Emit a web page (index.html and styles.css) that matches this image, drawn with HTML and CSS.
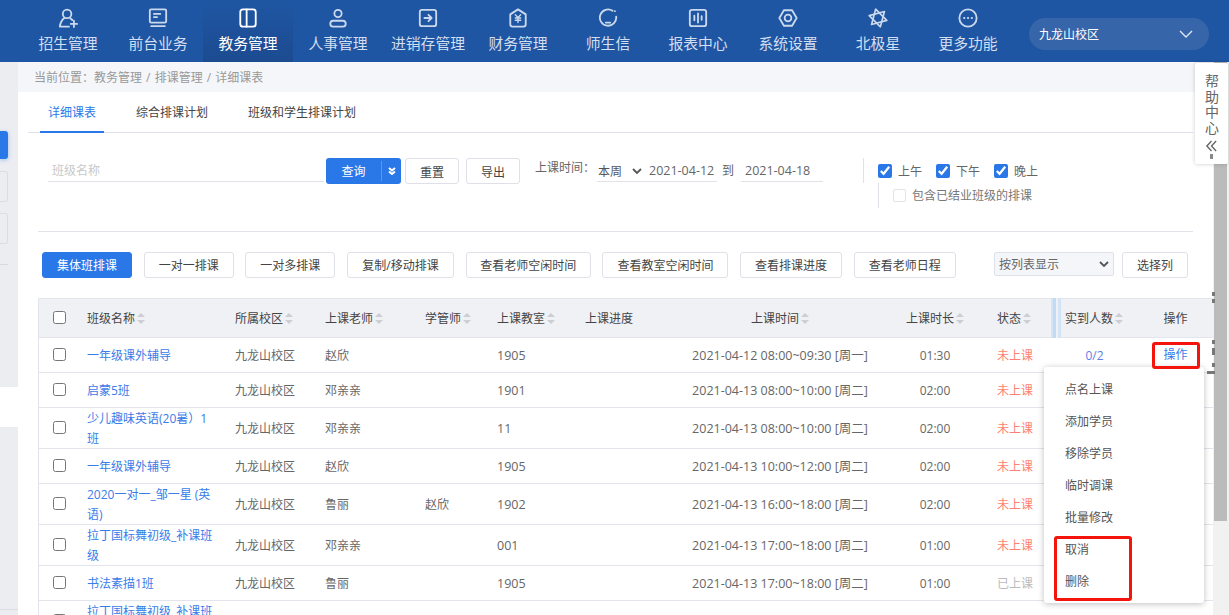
FILE: index.html
```html
<!DOCTYPE html>
<html lang="zh-CN">
<head>
  <meta charset="UTF-8" />
  <title>详细课表</title>
  <link rel="stylesheet" href="styles.css">
</head>
<body>

  <header class="topbar">
    <a class="nav-item">
      <svg class="nav-icon" viewBox="0 0 22 22"><circle cx="10" cy="6.500" r="4.700"/><path d="M7 11 C4.500 13 2.500 16 2 20.500 H12"/><path d="M13.500 11.300 C14.500 12 15.200 12.500 15.800 13.300"/><path d="M14 17.500 H21 M17.500 14 V21"/></svg>
      <span>招生管理</span>
    </a>
    <a class="nav-item">
      <svg class="nav-icon" viewBox="0 0 22 22"><rect x="2" y="1.500" width="18" height="14.500" rx="1.500"/><path d="M3.500 20 H18.500"/><path d="M6.500 6.500 H13.500 M6.500 10 H10"/></svg>
      <span>前台业务</span>
    </a>
    <a class="nav-item active">
      <svg class="nav-icon" viewBox="0 0 22 22"><rect x="2.500" y="1.500" width="17" height="19" rx="3"/><path d="M9.500 1.500 V20.500"/></svg>
      <span>教务管理</span>
    </a>
    <a class="nav-item">
      <svg class="nav-icon" viewBox="0 0 22 22"><circle cx="11" cy="6" r="4"/><rect x="2.500" y="14" width="17" height="6.500" rx="3.250"/></svg>
      <span>人事管理</span>
    </a>
    <a class="nav-item">
      <svg class="nav-icon" viewBox="0 0 22 22"><rect x="2" y="2" width="18" height="18" rx="2.500"/><path d="M7 11 H15 M11.500 7.500 L15 11 L11.500 14.500"/></svg>
      <span>进销存管理</span>
    </a>
    <a class="nav-item">
      <svg class="nav-icon" viewBox="0 0 22 22"><path d="M11 1.500 L19.500 7 V18 Q19.500 20.500 17 20.500 H5 Q2.500 20.500 2.500 18 V7 Z"/><path d="M8 7.500 L11 10.500 L14 7.500 M11 10.500 V16 M8 11 H14 M8 13.500 H14" stroke-width="1.500"/></svg>
      <span>财务管理</span>
    </a>
    <a class="nav-item">
      <svg class="nav-icon" viewBox="0 0 22 22"><path d="M16 3 A9 9 0 1 0 20 9.500"/><path d="M18.500 3.500 h.1"/><path d="M8.500 16 H13.500"/></svg>
      <span>师生信</span>
    </a>
    <a class="nav-item">
      <svg class="nav-icon" viewBox="0 0 22 22"><rect x="2" y="2" width="18" height="18" rx="2.500"/><path d="M7 8.500 V13.500 M11 6 V16 M15 9 V13"/></svg>
      <span>报表中心</span>
    </a>
    <a class="nav-item">
      <svg class="nav-icon" viewBox="0 0 22 22"><path d="M6.500 2.500 H15.500 L20.500 11 L15.500 19.500 H6.500 L1.500 11 Z"/><circle cx="11" cy="11" r="3.700"/></svg>
      <span>系统设置</span>
    </a>
    <a class="nav-item">
      <svg class="nav-icon" viewBox="0 0 22 22"><path d="M8.400 1.300 L20.700 13.600 L3.900 18.100 Z" stroke-width="1.800"/><path d="M18.100 3.900 L13.600 20.700 L1.300 8.400 Z" stroke-width="1.800"/></svg>
      <span>北极星</span>
    </a>
    <a class="nav-item">
      <svg class="nav-icon" viewBox="0 0 22 22"><circle cx="11" cy="11" r="9.500"/><path class="dots" d="M6.800 11 h.1 M11 11 h.1 M15.200 11 h.1"/></svg>
      <span>更多功能</span>
    </a>
    <div class="campus">
      <span>九龙山校区</span>
      <svg class="campus-arrow" viewBox="0 0 14 8"><path d="M1 1 L7 7 L13 1"/></svg>
    </div>
  </header>

  <div class="layout">
    <aside class="sidenav">
      <div class="side-top">
        <div class="side-btn primary"></div>
        <div class="side-btn"></div>
        <div class="side-btn"></div>
        <div class="side-line"></div>
      </div>
      <div class="side-gap"></div>
      <div class="side-bottom"></div>
    </aside>

    <main class="content">
      <div class="breadcrumb">当前位置：教务管理 / 排课管理 / 详细课表</div>

      <div class="panel">
        <nav class="tabs">
          <a class="tab current">详细课表</a>
          <a class="tab">综合排课计划</a>
          <a class="tab">班级和学生排课计划</a>
        </nav>

        <section class="filter">
          <div class="filter-input">班级名称</div>
          <div class="split-btn"><span class="split-main">查询</span><span class="split-arrow"><svg viewBox="0 0 8 8"><path d="M1 1 L4 3.500 L7 1 M1 4.500 L4 7 L7 4.500"/></svg></span></div>
          <button class="btn btn-reset">重置</button>
          <button class="btn btn-export">导出</button>
          <span class="filter-label">上课时间：</span>
          <div class="week-select">本周<svg class="select-arrow" viewBox="0 0 10 6"><path d="M1 1 L5 5 L9 1"/></svg></div>
          <div class="date-field first">2021-04-12</div>
          <span class="date-to">到</span>
          <div class="date-field">2021-04-18</div>
          <div class="periods">
            <div class="period-row">
              <label><input type="checkbox" checked>上午</label>
              <label><input type="checkbox" checked>下午</label>
              <label><input type="checkbox" checked>晚上</label>
            </div>
            <div class="period-extra">
              <label><input type="checkbox" class="light">包含已结业班级的排课</label>
            </div>
          </div>
        </section>

        <section class="toolbar">
          <button class="btn btn-primary w90">集体班排课</button>
          <button class="btn w90">一对一排课</button>
          <button class="btn w90">一对多排课</button>
          <button class="btn w107">复制/移动排课</button>
          <button class="btn w125">查看老师空闲时间</button>
          <button class="btn w126">查看教室空闲时间</button>
          <button class="btn w102">查看排课进度</button>
          <button class="btn w102">查看老师日程</button>
          <div class="view-select">按列表显示<svg class="select-arrow" viewBox="0 0 10 6"><path d="M1 1 L5 5 L9 1"/></svg></div>
          <button class="btn btn-cols">选择列</button>
        </section>

        <div class="table-wrap">
          <table class="course-table">
            <colgroup>
              <col class="c-check"><col class="c-name"><col class="c-campus"><col class="c-teacher"><col class="c-manager"><col class="c-room"><col class="c-progress"><col class="c-time"><col class="c-length"><col class="c-status"><col class="c-count"><col class="c-op">
            </colgroup>
            <thead>
              <tr>
                <th class="check"><input type="checkbox"></th>
                <th>班级名称<i class="sort"></i></th>
                <th>所属校区<i class="sort"></i></th>
                <th>上课老师<i class="sort"></i></th>
                <th>学管师<i class="sort"></i></th>
                <th>上课教室<i class="sort"></i></th>
                <th>上课进度</th>
                <th class="center time">上课时间<i class="sort"></i></th>
                <th class="center">上课时长<i class="sort"></i></th>
                <th class="status">状态<i class="sort"></i></th>
                <th class="count-head">实到人数<i class="sort"></i></th>
                <th class="center op">操作</th>
              </tr>
            </thead>
            <tbody>
              <tr>
                <td class="check"><input type="checkbox"></td>
                <td class="name"><a class="link">一年级课外辅导</a></td>
                <td>九龙山校区</td>
                <td>赵欣</td>
                <td></td>
                <td class="num">1905</td>
                <td></td>
                <td class="center time num">2021-04-12 08:00~09:30 [周一]</td>
                <td class="center">01:30</td>
                <td class="status todo">未上课</td>
                <td class="center count">0/2</td>
                <td class="center op"><a class="link raised">操作</a></td>
              </tr>
              <tr>
                <td class="check"><input type="checkbox"></td>
                <td class="name"><a class="link">启蒙5班</a></td>
                <td>九龙山校区</td>
                <td>邓亲亲</td>
                <td></td>
                <td class="num">1901</td>
                <td></td>
                <td class="center time num">2021-04-13 08:00~10:00 [周二]</td>
                <td class="center">02:00</td>
                <td class="status todo">未上课</td>
                <td></td>
                <td></td>
              </tr>
              <tr>
                <td class="check"><input type="checkbox"></td>
                <td class="name"><a class="link">少儿趣味英语(20暑）1班</a></td>
                <td>九龙山校区</td>
                <td>邓亲亲</td>
                <td></td>
                <td class="num">11</td>
                <td></td>
                <td class="center time num">2021-04-13 08:00~10:00 [周二]</td>
                <td class="center">02:00</td>
                <td class="status todo">未上课</td>
                <td></td>
                <td></td>
              </tr>
              <tr>
                <td class="check"><input type="checkbox"></td>
                <td class="name"><a class="link">一年级课外辅导</a></td>
                <td>九龙山校区</td>
                <td>赵欣</td>
                <td></td>
                <td class="num">1905</td>
                <td></td>
                <td class="center time num">2021-04-13 10:00~12:00 [周二]</td>
                <td class="center">02:00</td>
                <td class="status todo">未上课</td>
                <td></td>
                <td></td>
              </tr>
              <tr>
                <td class="check"><input type="checkbox"></td>
                <td class="name"><a class="link">2020一对一_邹一星 (英语)</a></td>
                <td>九龙山校区</td>
                <td>鲁丽</td>
                <td>赵欣</td>
                <td class="num">1902</td>
                <td></td>
                <td class="center time num">2021-04-13 16:00~18:00 [周二]</td>
                <td class="center">02:00</td>
                <td class="status todo">未上课</td>
                <td></td>
                <td></td>
              </tr>
              <tr>
                <td class="check"><input type="checkbox"></td>
                <td class="name"><a class="link">拉丁国标舞初级_补课班级</a></td>
                <td>九龙山校区</td>
                <td>邓亲亲</td>
                <td></td>
                <td class="num">001</td>
                <td></td>
                <td class="center time num">2021-04-13 17:00~18:00 [周二]</td>
                <td class="center">01:00</td>
                <td class="status todo">未上课</td>
                <td></td>
                <td></td>
              </tr>
              <tr>
                <td class="check"><input type="checkbox"></td>
                <td class="name"><a class="link">书法素描1班</a></td>
                <td>九龙山校区</td>
                <td>鲁丽</td>
                <td></td>
                <td class="num">1905</td>
                <td></td>
                <td class="center time num">2021-04-13 17:00~18:00 [周二]</td>
                <td class="center">01:00</td>
                <td class="status done">已上课</td>
                <td></td>
                <td></td>
              </tr>
              <tr>
                <td class="check"><input type="checkbox"></td>
                <td class="name"><a class="link">拉丁国标舞初级_补课班级</a></td>
                <td></td>
                <td></td>
                <td></td>
                <td></td>
                <td></td>
                <td></td>
                <td></td>
                <td></td>
                <td></td>
                <td class="center op"><a class="link">操作</a></td>
              </tr>
            </tbody>
          </table>

          <div class="col-resizer"></div>

          <ul class="op-menu">
            <li>点名上课</li>
            <li>添加学员</li>
            <li>移除学员</li>
            <li>临时调课</li>
            <li>批量修改</li>
            <li>取消</li>
            <li>删除</li>
          </ul>

          <!-- 红框标注 -->
          <div class="mark mark-op"></div>
          <div class="mark mark-menu"></div>

          <i class="speck s1"></i><i class="speck s2"></i><i class="speck s3"></i><i class="speck s4"></i><i class="speck s5"></i><i class="speck s6"></i>
        </div>
      </div>
    </main>

    <div class="scrollbar"><div class="scroll-thumb"></div></div>
  </div>

  <div class="help">
    <div class="help-text">帮助中心</div>
    <svg class="help-fold" viewBox="0 0 14 13"><path d="M7 1 L2 6.500 L7 12 M12 1 L7 6.500 L12 12"/></svg>
    <i class="help-dot"></i>
  </div>

</body>
</html>
```

FILE: styles.css
```css
* {
  box-sizing: border-box;
}

html, body {
  height: 100%;
}

body {
  margin: 0;
  height: 615px;
  overflow: hidden;
  font-family: "Open Sans", "Noto Sans CJK SC", sans-serif;
  font-size: 12px;
  color: #666;
  background: #fff;
}

/* 顶部导航 */
.topbar {
  display: flex;
  height: 62px;
  padding-left: 23px;
  background: #1f56a3;
}

.nav-item {
  display: flex;
  flex-direction: column;
  align-items: center;
  width: 90px;
  padding-top: 8px;
  color: #d3dff0;
  font-size: 14.800px;
  line-height: 22px;
}

.nav-item span {
  margin-top: 4px;
}

.nav-item.active {
  color: #fff;
  background: linear-gradient(#1f56a3, #1c4b90);
}

.nav-icon {
  width: 20px;
  height: 20px;
  fill: none;
  stroke: #cbd9ed;
  stroke-width: 2;
  stroke-linecap: round;
  stroke-linejoin: round;
}

.active .nav-icon {
  stroke: #fff;
}

.nav-icon .dots {
  stroke-width: 2.400;
}

.campus {
  display: flex;
  align-items: center;
  justify-content: space-between;
  width: 180px;
  height: 32px;
  margin: 18px 0 0 16px;
  padding: 0 16px 0 10px;
  border-radius: 16px;
  background: #3665a9;
  color: #fff;
  font-size: 12px;
}

.campus-arrow {
  width: 14px;
  height: 8px;
  fill: none;
  stroke: #dfe7f3;
  stroke-width: 1.400;
}

/* 主体 */
.layout {
  display: flex;
  height: 553px;
}

.sidenav {
  display: flex;
  flex-direction: column;
  flex: none;
  width: 18px;
}

.side-top {
  height: 325px;
  padding-top: 69px;
  background: #ecedf1;
}

.side-gap {
  height: 40px;
  background: #fff;
}

.side-bottom {
  flex: 1;
  background: #ecedf1;
  background-image: linear-gradient(#dcdde2, #dcdde2);
  background-repeat: no-repeat;
  background-size: 100% 1px;
  background-position: 0 182px;
}

.side-btn {
  width: 8px;
  height: 31px;
  margin-bottom: 11px;
  border: 1px solid #dcdde3;
  border-left: 0;
  border-radius: 0 3px 3px 0;
}

.side-btn.primary {
  height: 28px;
  margin-bottom: 12px;
  border: 0;
  background: #2a78e8;
  box-shadow: 0 1px 4px rgba(42, 120, 232, 0.4);
}

.side-line {
  width: 8px;
  height: 1px;
  margin-top: 20px;
  background: #d8d9df;
}

.content {
  flex: 1;
  min-width: 0;
}

.breadcrumb {
  height: 30px;
  padding: 7px 0 0 16px;
  background: #f5f6fa;
  color: #999;
  line-height: 18px;
  word-spacing: 1px;
}

.panel {
  background: #fff;
}

/* tabs */
.tabs {
  display: flex;
  height: 41px;
  margin: 0 20px 0 10px;
  padding-left: 12px;
  border-bottom: 1px solid #dfe0ea;
}

.tab {
  height: 41px;
  margin-right: 8px;
  padding: 12px 16px 0;
  color: #444;
  line-height: 18px;
}

.tab.current {
  margin-right: 16px;
  padding: 12px 8px 0;
  width: 64px;
  color: #2a78e8;
  border-bottom: 2px solid #2a78e8;
}

/* 查询条件 */
.filter {
  position: relative;
  display: flex;
  align-items: flex-start;
  height: 98px;
  padding: 25px 0 0 30px;
}

.filter-input {
  width: 276px;
  height: 24px;
  padding-left: 4px;
  border-bottom: 1px solid #e2e3ea;
  color: #c8c8c8;
  line-height: 26px;
}

.split-btn {
  display: flex;
  width: 75px;
  height: 26px;
  margin-left: 2px;
  border-radius: 3px;
  background: #2a78e8;
  color: #fff;
  line-height: 28px;
}

.split-main {
  width: 55px;
  text-align: center;
}

.split-arrow {
  display: flex;
  align-items: center;
  justify-content: center;
  flex: 1;
  margin: 3px 0;
  border-left: 1px solid #5a96ee;
}

.split-arrow svg {
  width: 8px;
  height: 8px;
  fill: none;
  stroke: #fff;
  stroke-width: 2;
}

.btn {
  height: 26px;
  margin: 0;
  padding: 0;
  border: 1px solid #dfe0e8;
  border-radius: 3px;
  background: #fff;
  color: #444;
  font: inherit;
}

.btn-reset {
  width: 54px;
  margin-left: 4px;
  padding-top: 2px;
}

.btn-export {
  width: 54px;
  margin-left: 7px;
  padding-top: 2px;
}

.filter-label {
  margin-left: 15px;
  line-height: 20px;
  width: 62px;
}

.week-select {
  display: flex;
  align-items: center;
  justify-content: space-between;
  width: 48px;
  height: 24px;
  padding: 2px 3px 0 1px;
  border-bottom: 1px solid #e2e3ea;
  color: #555;
}

.select-arrow {
  width: 10px;
  height: 6px;
  fill: none;
  stroke: #555;
  stroke-width: 1.800;
}

.date-field {
  width: 82px;
  height: 24px;
  padding-left: 4px;
  border-bottom: 1px solid #e2e3ea;
  color: #666;
  font-size: 12.500px;
  line-height: 26px;
}

.date-field.first {
  width: 72px;
}

.date-to {
  width: 24px;
  line-height: 25px;
  padding-left: 5px;
}

.periods {
  width: 330px;
  height: 50px;
  margin-left: 40px;
}

.periods label {
  display: flex;
  align-items: center;
}

.periods input {
  width: 14px;
  height: 14px;
  margin: 0 6px 0 0;
  accent-color: #2a78e8;
}

.period-row {
  display: flex;
  height: 25px;
  gap: 14px;
  padding-left: 14px;
  border-left: 1px solid #dfe0e8;
}

.period-extra {
  height: 25px;
  margin-left: 15px;
  padding-left: 14px;
  border-left: 1px solid #dfe0e8;
  line-height: 25px;
  color: #777;
}

.period-extra label {
  height: 25px;
}

.periods input.light {
  appearance: none;
  width: 13px;
  height: 13px;
  margin-right: 6px;
  border: 1px solid #e3e3e8;
  border-radius: 2px;
  background: #fff;
}

/* 工具条 */
.toolbar {
  display: flex;
  align-items: flex-start;
  gap: 11.700px;
  height: 67px;
  margin: 0 20px;
  padding: 20px 0 0 4px;
  border-top: 1px solid #e2e3ea;
}

.btn-primary {
  border-color: #2a78e8;
  background: #2a78e8;
  color: #fff;
}

.w90 { width: 90px; }
.w107 { width: 107px; }
.w125 { width: 125px; }
.w126 { width: 126px; }
.w102 { width: 102px; }

.view-select {
  display: flex;
  align-items: center;
  justify-content: space-between;
  width: 120px;
  height: 24px;
  margin-left: 26.400px;
  padding: 0 4px;
  border: 1px solid #dfe0e8;
  border-radius: 2px;
  background: #f5f6fa;
  color: #666;
}

.btn-cols {
  width: 66px;
  margin-left: -3.700px;
}

/* 表格 */
.table-wrap {
  position: relative;
  margin-left: 20px;
}

.course-table {
  width: 1175px;
  table-layout: fixed;
  border-collapse: separate;
  border-spacing: 0;
  border-left: 1px solid #e2e3ea;
}

.c-check { width: 41px; }
.c-name { width: 148px; }
.c-campus { width: 90px; }
.c-teacher { width: 100px; }
.c-manager { width: 72px; }
.c-room { width: 88px; }
.c-progress { width: 82px; }
.c-time { width: 230px; }
.c-length { width: 90px; }
.c-status { width: 75px; }
.c-count { width: 77px; }
.c-op { width: 81px; }

.course-table th {
  height: 40px;
  padding: 0 7px;
  border-top: 1px solid #e4e5ec;
  border-bottom: 1px solid #e4e5ec;
  background: #f0f1f5;
  color: #444;
  font-weight: normal;
  text-align: left;
}

.course-table td {
  height: 35px;
  padding: 1px 7px 0;
  border-bottom: 1px solid #e4e5ec;
  line-height: 20px;
  color: #666;
}

.course-table td.name {
  padding: 0 10px 0 7px;
}

.course-table .num {
  font-size: 12.500px;
}

.course-table .check {
  padding: 0 0 1px 14px;
}

.check input {
  display: block;
  width: 13px;
  height: 13px;
  margin: 0;
}

.course-table .center {
  text-align: center;
}

.course-table .time {
  padding-left: 17px;
}

.course-table .status {
  padding-left: 17px;
}

.course-table .count-head {
  padding-left: 10px;
}

.course-table .op {
  padding: 0 0 0 6px;
}

.link {
  position: relative;
  top: 1px;
  color: #3a7ce8;
}

.raised {
  top: 0;
}

.course-table .todo {
  color: #ff7f72;
}

.course-table .done {
  color: #bbb;
}

.course-table .count {
  padding-left: 9px;
  color: #5f7de4;
}

.sort {
  display: inline-block;
  position: relative;
  width: 8px;
  height: 11px;
  margin-left: 2px;
  vertical-align: -1px;
}

.sort::before,
.sort::after {
  content: '';
  position: absolute;
  left: 0;
  border-left: 4px solid transparent;
  border-right: 4px solid transparent;
}

.sort::before {
  top: 0;
  border-bottom: 4px solid #ccced3;
}

.sort::after {
  bottom: 0;
  border-top: 4px solid #ccced3;
}

.col-resizer {
  position: absolute;
  left: 1013px;
  top: 0;
  width: 10px;
  height: 40px;
  background: linear-gradient(90deg, #d2e4f5 0 2px, #c2daf2 2px 5px, #f0f1f5 5px 7px, #d2e4f5 7px);
}

.op-menu {
  position: absolute;
  left: 1006px;
  top: 69px;
  width: 160px;
  height: 236px;
  margin: 0;
  padding: 7px 0 0 21px;
  list-style: none;
  border-radius: 3px;
  background: #fff;
  box-shadow: 0 1px 6px rgba(0, 0, 0, 0.25);
  color: #555;
}

.op-menu li {
  height: 32px;
  line-height: 32px;
}

.mark {
  position: absolute;
  border: 3px solid #f5140c;
  border-radius: 3px;
}

.mark-op {
  left: 1114px;
  top: 44px;
  width: 48px;
  height: 27px;
}

.mark-menu {
  left: 1016px;
  top: 238px;
  width: 78px;
  height: 65px;
}

/* 右侧小灰点 */
.speck {
  position: absolute;
  width: 3px;
  height: 4px;
  background: #777;
}

.s1 { left: 1174px; top: -6px; }
.s2 { left: 1174px; top: 1px; }
.s3 { left: 1174px; top: 42px; }
.s4 { left: 1174px; top: 50px; height: 7px; }
.s5 { left: 1174px; top: 65px; }
.s6 { left: 1169px; top: 73px; width: 8px; height: 3px; }

.scrollbar {
  flex: none;
  width: 16px;
  padding-left: 1px;
  background: #f1f1f1;
}

.scroll-thumb {
  width: 13px;
  height: 459px;
  background: #bbb;
}

/* 帮助中心 */
.help {
  position: absolute;
  left: 1195px;
  top: 63px;
  display: flex;
  flex-direction: column;
  align-items: center;
  width: 33px;
  height: 101px;
  padding-top: 10px;
  border-radius: 2px;
  background: #fff;
  box-shadow: 0 0 4px rgba(0, 0, 0, 0.2);
  color: #666;
  font-size: 14px;
  line-height: 15.700px;
}

.help-text {
  width: 14px;
  margin-left: 1px;
}

.help-fold {
  width: 13px;
  height: 12px;
  margin-top: 4px;
  fill: none;
  stroke: #666;
  stroke-width: 1.500;
}

.help-dot {
  width: 3px;
  height: 5px;
  margin-top: 2px;
  background: #888;
}
```
